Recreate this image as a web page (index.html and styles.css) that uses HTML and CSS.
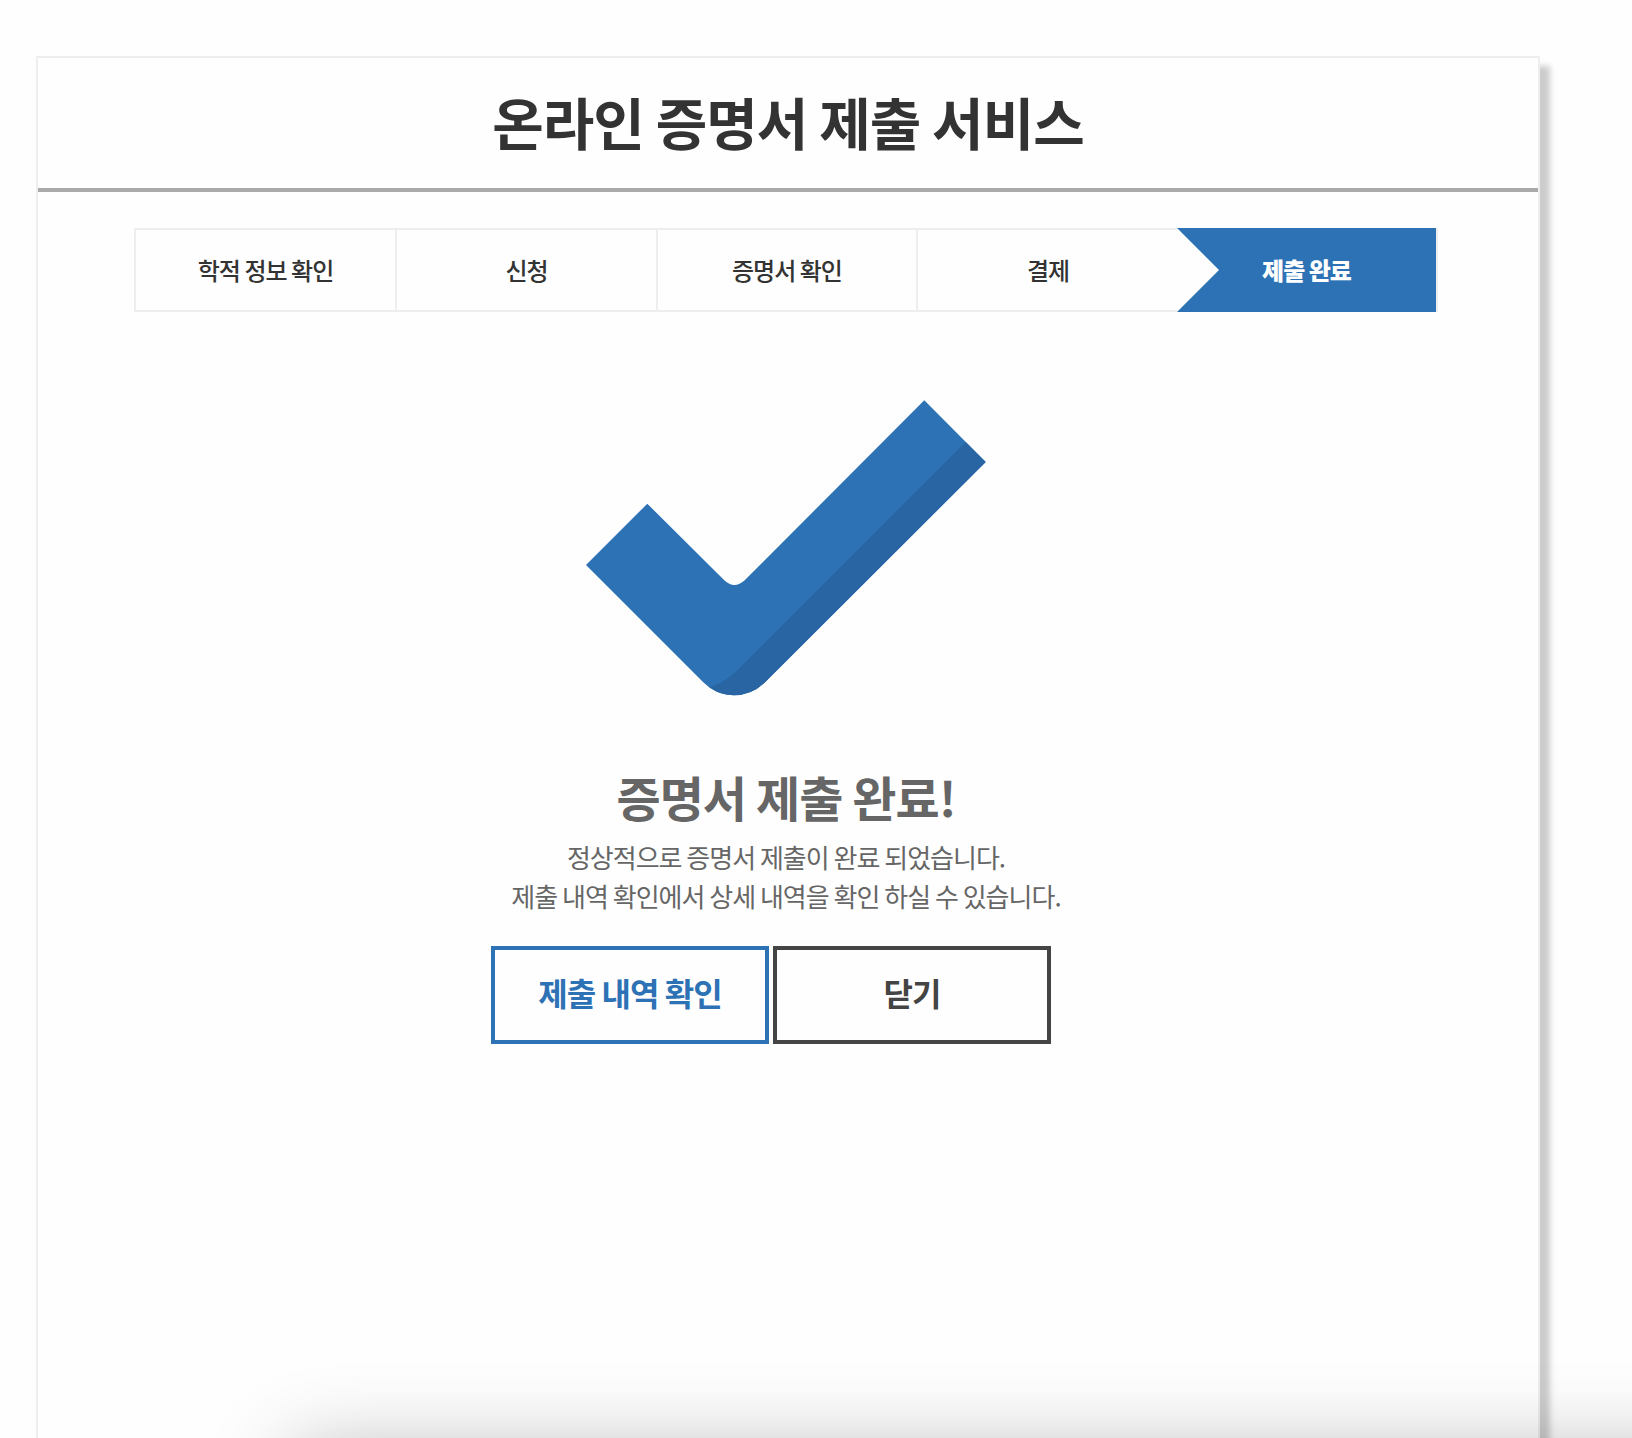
FILE: index.html
```html
<!DOCTYPE html>
<html lang="ko">
<head>
<meta charset="utf-8">
<title>온라인 증명서 제출 서비스</title>
<link rel="stylesheet" href="styles.css">
</head>
<body>
<main class="panel">
  <header class="panel-header"><h1 class="title">온라인 증명서 제출 서비스</h1></header>
  <ol class="steps">
    <li class="step">학적 정보 확인</li>
    <li class="step">신청</li>
    <li class="step">증명서 확인</li>
    <li class="step step-last">결제</li>
    <li class="step step-active">제출 완료</li>
  </ol>
  <section class="result">
    <svg class="check" width="400" height="296" viewBox="0 0 400 296" aria-hidden="true">
      <path fill="#2d72b5" d="M0 165 61.3 103.7 138.3 180.3Q148.3 189.7 158.7 180.3L338.3 .3 399.7 62 179.3 282Q166 295.3 147.5 295.3 130 295.3 117 282Z"/>
      <path fill="#2965a3" d="M379.7 42 399.7 62 179.3 282Q166 295.3 147.5 295.3 134 295.3 123.5 287 135 285 149.5 272Z"/>
    </svg>
    <h2 class="result-title">증명서 제출 완료!</h2>
    <p class="message">정상적으로 증명서 제출이 완료 되었습니다.<br>제출 내역 확인에서 상세 내역을 확인 하실 수 있습니다.</p>
    <div class="actions">
      <button class="button button-primary" type="button">제출 내역 확인</button>
      <button class="button" type="button">닫기</button>
    </div>
  </section>
</main>
<div class="window-shadow"></div>
</body>
</html>
```
FILE: styles.css
```css
* { box-sizing: border-box; }

html { overflow: hidden; }

body {
  margin: 0;
  height: 1438px;
  overflow: hidden;
  position: relative;
  padding: 56px 92px 0 36px;
  background: #fefefe;
  color: #333;
  font-family: "Noto Sans CJK KR", sans-serif;
  letter-spacing: -1px;
}

.panel {
  height: 1500px;
  border: 2px solid #eee;
  background: #fefefe;
  box-shadow: 10px 10px 6px #ccc;
}

.panel-header {
  height: 134px;
  padding-bottom: 4px;
  border-bottom: 4px solid #aaa;
  display: flex;
  justify-content: center;
  align-items: center;
}

.title { margin: 0; font-size: 56px; line-height: 80px; font-weight: 700; word-spacing: -.05em; }

.steps {
  display: grid;
  grid-template-columns: 261px 261px 260px 260px 260px;
  width: 1304px;
  height: 84px;
  margin: 36px 0 0 96px;
  padding: 0;
  border: 2px solid #eee;
  border-right: 0;
  list-style: none;
}

.step {
  display: flex;
  align-items: center;
  justify-content: center;
  padding-bottom: 2px;
  border-right: 2px solid #eee;
  font-size: 24px;
  font-weight: 500;
  word-spacing: -.05em;
}

.step-last { border-right: 0; }

.step-active {
  position: relative;
  margin: -2px 0 -2px -1px;
  color: #fff;
  font-weight: 900;
  background: #2d72b5 padding-box;
}

.step-active::before {
  content: "";
  position: absolute;
  left: 0;
  top: 0;
  width: 42px;
  height: 84px;
  background: #fefefe;
  clip-path: polygon(0 0, 100% 50%, 0 100%);
}

.result {
  display: flex;
  flex-direction: column;
  align-items: center;
  padding-right: 4px;
  color: #666;
}

.check { display: block; margin-top: 88px; }

.result-title { margin: 65px 0 0; font-size: 48px; line-height: 70px; font-weight: 700; word-spacing: -.05em; }

.message { margin: 6px 0 0; font-size: 26px; line-height: 39px; text-align: center; word-spacing: -.055em; }

.actions { display: flex; gap: 4px; margin: 31px 30px 0 0; }

.button {
  width: 278px;
  height: 98px;
  padding: 0 0 6px;
  border: 4px solid #444;
  background: #fefefe;
  color: #444;
  font: 700 32px "Noto Sans CJK KR", sans-serif;
  letter-spacing: -1px;
  word-spacing: -.05em;
}

.button-primary { border-color: #2d72b5; color: #2d72b5; }

/* Soft shadow cast by the floating window below the fold */
.window-shadow {
  position: absolute;
  left: 292px;
  top: 1455px;
  width: 1600px;
  height: 600px;
  box-shadow: 0 0 80px rgba(0, 0, 0, .31);
}
```
